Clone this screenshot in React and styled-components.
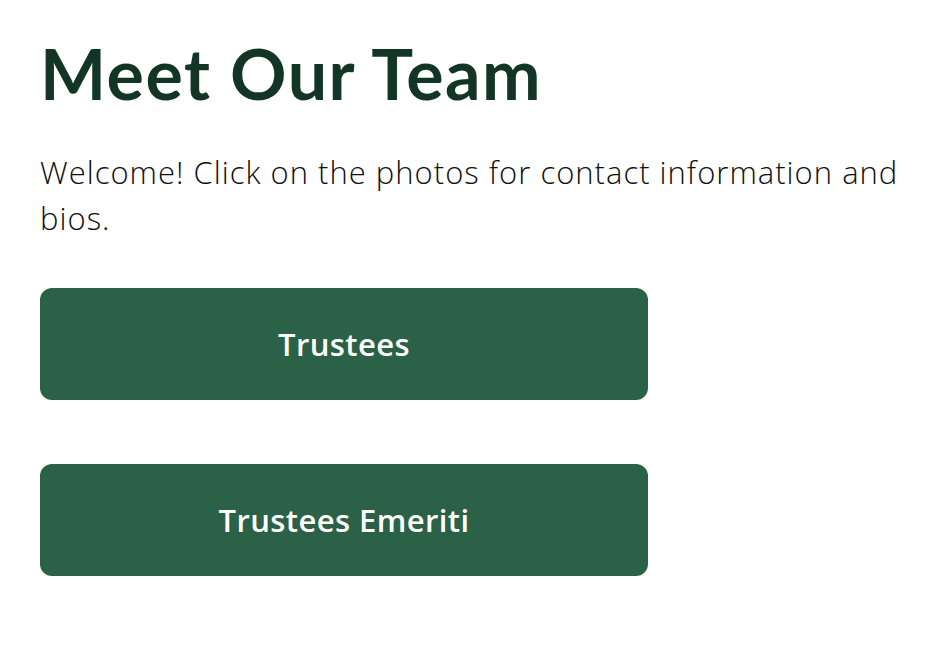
import React from 'react';
import styled, { createGlobalStyle } from 'styled-components';

const GlobalStyle = createGlobalStyle`
  body {
    margin: 0;
    background: #ffffff;
    font-family: Lato, 'Open Sans', sans-serif;
  }
`;

const Page = styled.div`
  padding: 33px 0 40px 40px;
`;

const Title = styled.h1`
  margin: 0;
  font-family: Lato, sans-serif;
  font-size: 70px;
  font-weight: 700;
  line-height: 80px;
  letter-spacing: 1.5px;
  color: #133526;
`;

const Intro = styled.p`
  margin: 36px 0 0 0;
  max-width: 870px;
  font-family: 'Open Sans', sans-serif;
  font-size: 31px;
  font-weight: 300;
  line-height: 46px;
  letter-spacing: 1px;
  color: #111111;
`;

const ButtonList = styled.div`
  display: flex;
  flex-direction: column;
  gap: 64px;
  margin-top: 47px;
`;

const TeamButton = styled.a`
  display: flex;
  align-items: center;
  justify-content: center;
  width: 608px;
  height: 112px;
  border-radius: 12px;
  background-color: #2a6147;
  color: #ffffff;
  font-family: 'Open Sans', sans-serif;
  font-size: 31px;
  font-weight: 600;
  letter-spacing: 0.4px;
  text-decoration: none;
  cursor: pointer;
`;

export default function App() {
  return (
    <Page>
      <GlobalStyle />
      <Title>Meet Our Team</Title>
      <Intro>Welcome! Click on the photos for contact information and bios.</Intro>
      <ButtonList>
        <TeamButton>Trustees</TeamButton>
        <TeamButton>Trustees Emeriti</TeamButton>
      </ButtonList>
    </Page>
  );
}
